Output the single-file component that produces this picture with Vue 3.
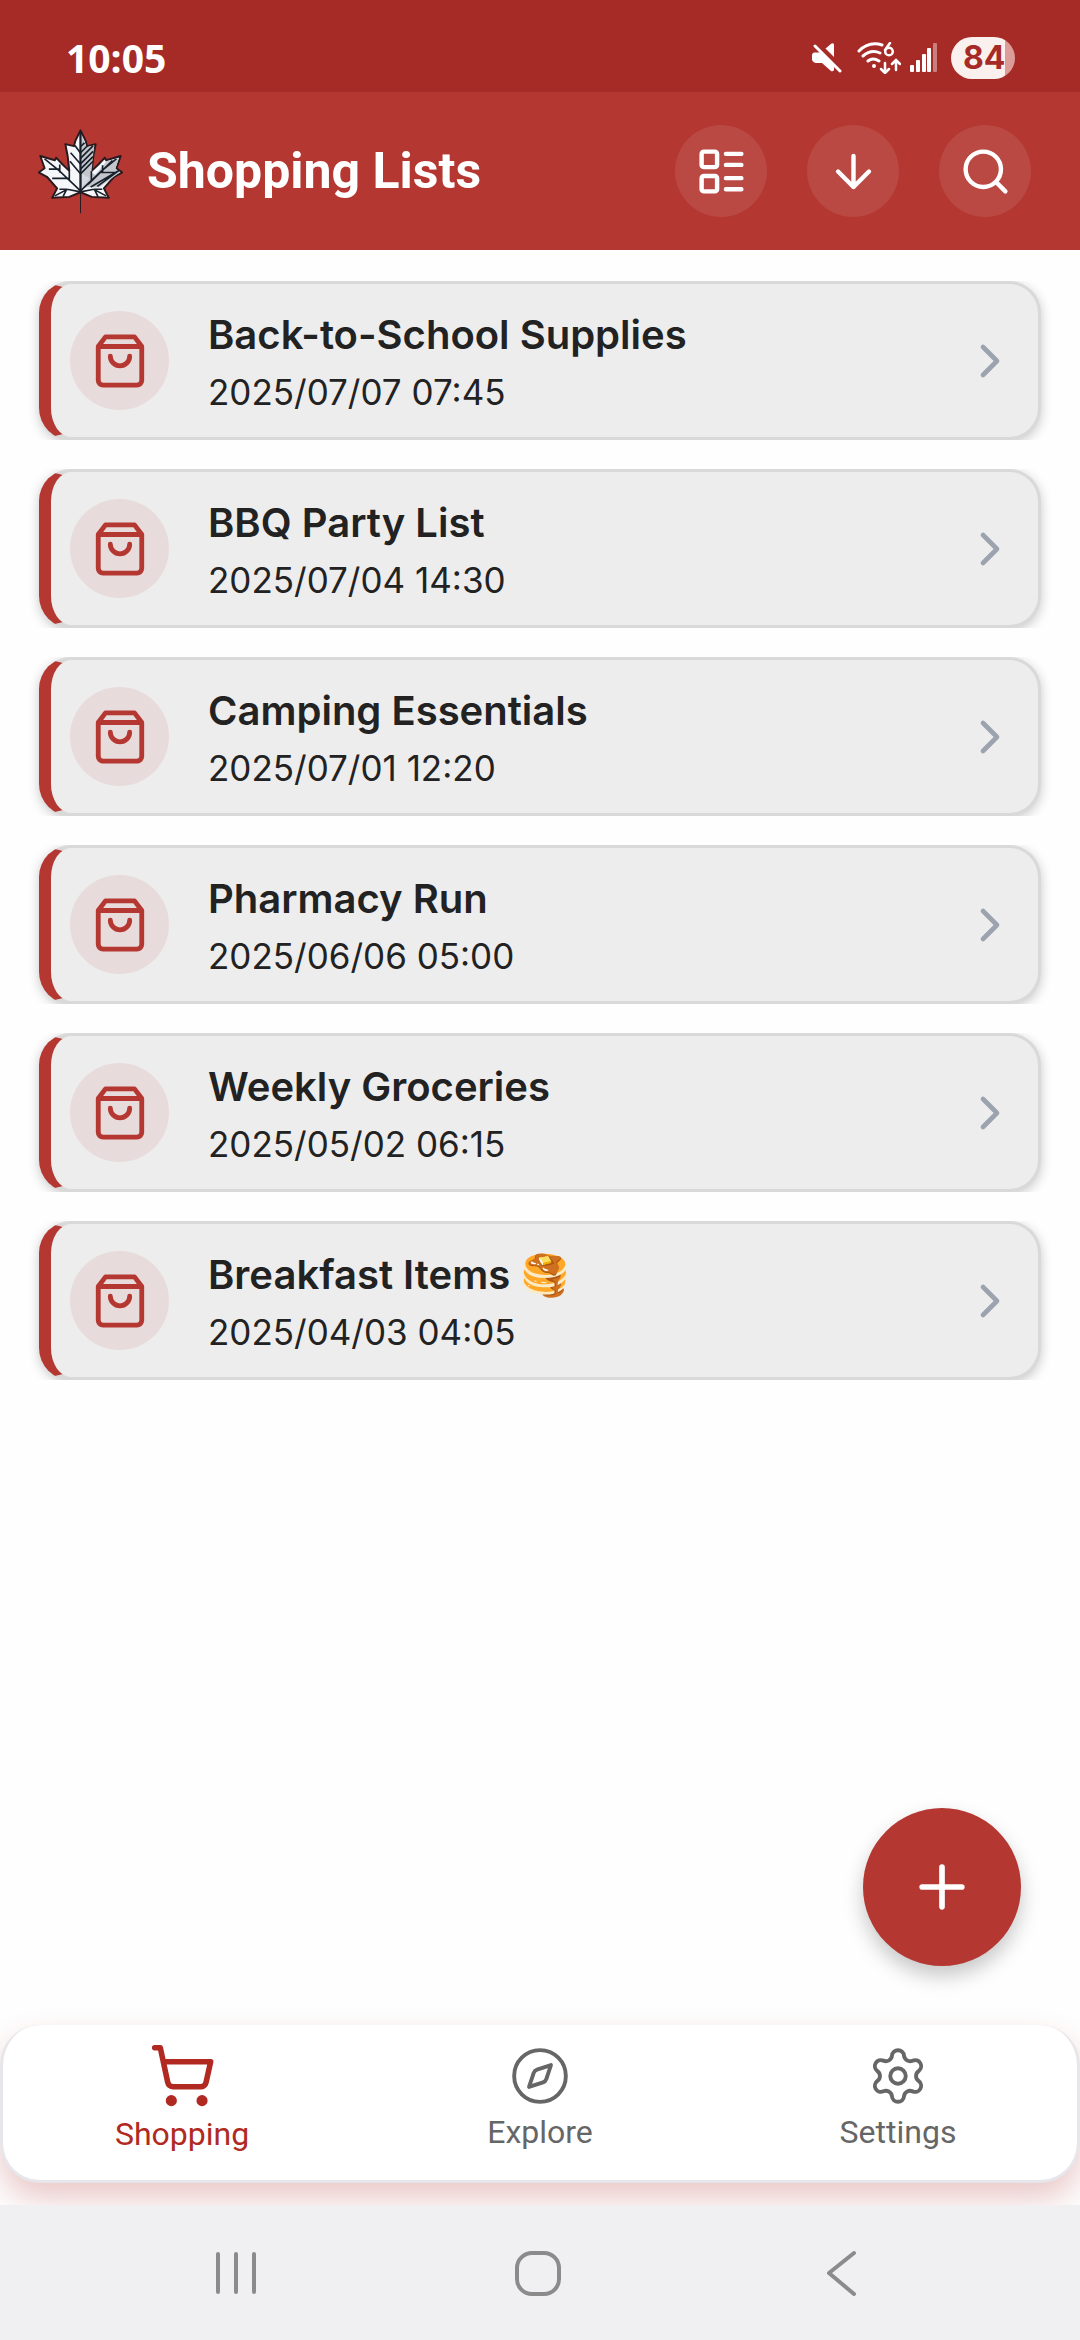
<script setup>
import { ref } from 'vue'

const lists = [
  { id: 1, title: 'Back-to-School Supplies', date: '2025/07/07 07:45' },
  { id: 2, title: 'BBQ Party List', date: '2025/07/04 14:30' },
  { id: 3, title: 'Camping Essentials', date: '2025/07/01 12:20' },
  { id: 4, title: 'Pharmacy Run', date: '2025/06/06 05:00' },
  { id: 5, title: 'Weekly Groceries', date: '2025/05/02 06:15' },
  { id: 6, title: 'Breakfast Items 🥞', date: '2025/04/03 04:05' },
]

const actions = [
  {
    label: 'Change layout',
    path: 'M4 3h5a1 1 0 0 1 1 1v5a1 1 0 0 1-1 1H4a1 1 0 0 1-1-1V4a1 1 0 0 1 1-1zM4 14h5a1 1 0 0 1 1 1v5a1 1 0 0 1-1 1H4a1 1 0 0 1-1-1v-5a1 1 0 0 1 1-1zM14 4h7M14 9h7M14 15h7M14 20h7',
  },
  { label: 'Sort descending', path: 'M12 5v14M19 12l-7 7-7-7' },
  { label: 'Search', path: 'M21 21l-4.34-4.34M19 11a8 8 0 1 1-16 0 8 8 0 0 1 16 0z' },
]

const tabs = [
  {
    name: 'Shopping',
    path: 'M2.05 2.05h2l2.66 12.42a2 2 0 0 0 2 1.58h9.78a2 2 0 0 0 1.95-1.57l1.65-7.43H5.12M9 21a1 1 0 1 1-2 0 1 1 0 0 1 2 0zM20 21a1 1 0 1 1-2 0 1 1 0 0 1 2 0z',
  },
  {
    name: 'Explore',
    path: 'M16.24 7.76l-1.804 5.411a2 2 0 0 1-1.265 1.265L7.76 16.24l1.804-5.411a2 2 0 0 1 1.265-1.265zM22 12a10 10 0 1 1-20 0 10 10 0 0 1 20 0z',
  },
  {
    name: 'Settings',
    path: 'M9.671 4.136a2.34 2.34 0 0 1 4.659 0 2.34 2.34 0 0 0 3.319 1.915 2.34 2.34 0 0 1 2.33 4.033 2.34 2.34 0 0 0 0 3.831 2.34 2.34 0 0 1-2.33 4.033 2.34 2.34 0 0 0-3.319 1.915 2.34 2.34 0 0 1-4.659 0 2.34 2.34 0 0 0-3.32-1.915 2.34 2.34 0 0 1-2.33-4.033 2.34 2.34 0 0 0 0-3.831A2.34 2.34 0 0 1 6.35 6.051a2.34 2.34 0 0 0 3.319-1.915M15 12a3 3 0 1 1-6 0 3 3 0 0 1 6 0z',
  },
]

const active = ref('Shopping')
</script>

<template>
  <div class="screen">
    <div class="status">
      <span class="clock">10:05</span>
      <div class="indicators">
        <svg class="mute" viewBox="0 0 30 30" fill="#fff" aria-hidden="true">
          <path d="M2 9.500h7.500L22 22v5q-1 2-3 1l-9-8H4q-4-1-4-4v-4q0-2 2-2.500z" />
          <path d="M13.500 5.500l6-5q2-1 2.500 1V14z" />
          <path d="M3 3l25 25" stroke="#fff" stroke-width="3" stroke-linecap="round" />
        </svg>
        <svg class="wifi" viewBox="0 0 44 32" fill="none" stroke="#fff" stroke-width="3" stroke-linecap="round" aria-hidden="true">
          <path d="M2 9Q12-1 25 3M6 14q8-7 17-3M11 19q5-4 11 0" />
          <circle cx="17" cy="24" r="2" fill="#fff" stroke="none" />
          <path d="M33 1l-5 7" stroke-width="2.500" />
          <circle cx="32" cy="9.500" r="3.800" stroke-width="2.500" />
          <path d="M28 21v9M24 27l4 4 4-4M39 28v-9M35 22l4-4 4 4" stroke-width="2.500" />
        </svg>
        <svg class="signal" viewBox="0 0 28 30" fill="#fff" aria-hidden="true">
          <rect x="0" y="22" width="4" height="7" rx="1" />
          <rect x="6" y="17" width="4" height="12" rx="1" />
          <rect x="12" y="11" width="4" height="18" rx="1" />
          <rect x="17" y="5" width="4" height="24" rx="1" />
          <rect x="23" y="0" width="4" height="29" rx="1" opacity="0.4" />
        </svg>
        <span class="battery">84</span>
      </div>
    </div>

    <header class="bar">
      <svg class="logo" viewBox="52 58 258 258" aria-hidden="true">
        <path
          d="M181 62l16 33 4 15 26-6-7 36-5 45 21-20 19-20 4 8 44-13-13 37 18 13-25 13-31 35 15 29-52-3-34-14-34 14-52 3 15-29-31-35-25-13 18-13-13-37 44 13 4-8 19 20 21 20-5-45-7-36 26 6 4-15z"
          fill="#f5f7fa" stroke="#2a1a20" stroke-width="6" stroke-linejoin="round"
        />
        <path d="M185 235V80l15 33 22-4-8 82 12 6 35-42 36-8-10 32 13 11-62 45z" fill="#c3c6cc" />
        <path d="M181 242V190l28 18z" fill="#d5d8df" />
        <g stroke="#18202a" stroke-width="7" fill="none">
          <path d="M181 64v184" />
          <path d="M181 246l-64-61-45-36M95 208h50M85 180h34M118 190v-24M181 194l-32-38M181 164l-30-34M181 131l-17-23M147 186v28M181 249l-40-8-38 20M141 241h-24M138 243l-10 20" stroke-width="5" />
          <path d="M181 246l64-61 45-36M181 194l38-38M181 180l38-38M181 164l38-38M181 147l38-38M181 130l22-22M181 112l12-12M214 186v28M204 226l74-72M212 234l86-50M232 232l60-44M248 168v22M244 190h46M181 249l40-8 38 20M221 241h26M224 243l10 20" stroke-width="5" />
        </g>
        <path d="M181 248v66" stroke="#2a1a20" stroke-width="3" />
      </svg>
      <h1>Shopping Lists</h1>
      <div class="actions">
        <button v-for="a in actions" :key="a.label" type="button" class="round" :aria-label="a.label">
          <svg class="line" viewBox="0 0 24 24"><path :d="a.path" /></svg>
        </button>
      </div>
    </header>

    <main>
      <ul class="lists">
        <li v-for="l in lists" :key="l.id">
          <a href="#" class="card">
            <span class="badge">
              <svg class="line" viewBox="0 0 24 24">
                <path d="M6 2L3 6v14a2 2 0 0 0 2 2h14a2 2 0 0 0 2-2V6l-3-4zM3 6h18M16 10a4 4 0 0 1-8 0" />
              </svg>
            </span>
            <span class="text">
              <span class="title">{{ l.title }}</span>
              <span class="date">{{ l.date }}</span>
            </span>
            <svg class="line chevron" viewBox="0 0 24 24"><path d="M9 18l6-6-6-6" /></svg>
          </a>
        </li>
      </ul>
      <button type="button" class="fab" aria-label="New list">
        <svg class="line" viewBox="0 0 24 24"><path d="M5 12h14M12 5v14" /></svg>
      </button>
    </main>

    <div class="dock">
      <nav class="tabs">
        <button
          v-for="t in tabs" :key="t.name" type="button" class="tab"
          :class="{ active: active === t.name }" @click="active = t.name"
        >
          <svg class="line" viewBox="0 0 24 24"><path :d="t.path" /></svg>
          <span>{{ t.name }}</span>
        </button>
      </nav>
    </div>

    <div class="system">
      <button type="button" aria-label="Recent apps">
        <svg viewBox="0 0 48 48"><path d="M6 5v38M24 5v38M42 5v38" /></svg>
      </button>
      <button type="button" aria-label="Home">
        <svg viewBox="0 0 48 48"><rect x="3" y="4" width="42" height="41" rx="15" /></svg>
      </button>
      <button type="button" aria-label="Back">
        <svg viewBox="0 0 48 48"><path d="M37 4L12 24l25 21" /></svg>
      </button>
    </div>
  </div>
</template>

<style>
body {
  margin: 0;
}
</style>

<style scoped>
.screen {
  display: flex;
  flex-direction: column;
  min-height: 100vh;
  background: #fefefe;
  font-family: Inter, "Noto Sans", sans-serif;
}

button {
  padding: 0;
  border: 0;
  background: none;
  font: inherit;
  cursor: pointer;
}

svg {
  display: block;
  flex: none;
}

.line {
  fill: none;
  stroke: currentColor;
  stroke-width: 2;
  stroke-linecap: round;
  stroke-linejoin: round;
}

.status {
  display: flex;
  align-items: center;
  justify-content: space-between;
  height: 68px;
  padding: 24px 65px 0 66px;
  background: #a62b26;
  color: #fff;
}

.clock {
  font: 700 39px/42px "Open Sans", sans-serif;
}

.indicators {
  display: flex;
  align-items: center;
}

.mute {
  width: 30px;
  height: 30px;
  margin-right: 15px;
}

.wifi {
  width: 44px;
  height: 32px;
  margin-right: 9px;
}

.signal {
  width: 28px;
  height: 30px;
  margin-right: 13px;
}

.battery {
  box-sizing: border-box;
  width: 64px;
  border-radius: 21px;
  padding-left: 12px;
  background: linear-gradient(90deg, #faf0ee 54px, #dc9d99 54px);
  color: #a62b26;
  font: 700 32px/42px Inter, sans-serif;
}

.bar {
  display: flex;
  align-items: center;
  height: 158px;
  padding: 0 49px 0 38px;
  background: #b43731;
  color: #fff;
}

.logo {
  width: 85px;
  height: 85px;
}

h1 {
  flex: 1;
  margin: 0 0 0 24px;
  font: 700 50px/56px Roboto, sans-serif;
}

.actions {
  display: flex;
  gap: 40px;
}

.round {
  display: grid;
  place-items: center;
  width: 92px;
  height: 92px;
  border-radius: 50%;
  background: rgba(255, 255, 255, 0.09);
  color: #fff;
}

.round svg {
  width: 53px;
  height: 53px;
}

main {
  position: relative;
  flex: 1;
}

.lists {
  display: flex;
  flex-direction: column;
  gap: 29px;
  margin: 0;
  padding: 31px 39px;
  list-style: none;
}

.card {
  box-sizing: border-box;
  display: flex;
  align-items: center;
  height: 159px;
  padding: 0 20px 0 19px;
  border: 3px solid #d9d9d9;
  border-left: 12px solid #b43731;
  border-radius: 32px;
  background: #ededed;
  color: #222;
  text-decoration: none;
  box-shadow: 0 3px 12px rgba(0, 0, 0, 0.22);
  clip-path: inset(0 -32px);
}

.badge {
  display: grid;
  place-items: center;
  width: 99px;
  height: 99px;
  border-radius: 50%;
  background: #e8dbdb;
  color: #b43731;
}

.badge svg {
  width: 58px;
  height: 58px;
}

.text {
  display: flex;
  flex: 1;
  flex-direction: column;
  margin-left: 39px;
}

.title {
  font-size: 40px;
  font-weight: 600;
  line-height: 62px;
}

.date {
  font-size: 35px;
  line-height: 52px;
}

.chevron {
  width: 56px;
  height: 56px;
  color: #9ca3af;
}

.fab {
  position: absolute;
  right: 59px;
  bottom: 59px;
  display: grid;
  place-items: center;
  width: 158px;
  height: 158px;
  border-radius: 50%;
  background: #b43731;
  color: #fff;
  box-shadow: 0 10px 20px rgba(0, 0, 0, 0.22);
}

.fab svg {
  width: 68px;
  height: 68px;
}

.dock {
  padding-bottom: 22px;
}

.tabs {
  box-sizing: border-box;
  display: grid;
  grid-template-columns: repeat(3, 1fr);
  height: 158px;
  border: 3px solid #e6e6eb;
  border-top: 0;
  border-radius: 40px;
  background: #fff;
  box-shadow: 0 16px 32px rgba(170, 30, 30, 0.24);
}

.tab {
  display: flex;
  flex-direction: column;
  align-items: center;
  justify-content: center;
  gap: 6px;
  padding-bottom: 10px;
  color: #666;
  font: 400 32px/38px Roboto, sans-serif;
}

.tab svg {
  width: 62px;
  height: 62px;
  stroke-width: 1.5;
}

.tab.active {
  color: #b02a22;
}

.tab.active svg {
  width: 67px;
  height: 67px;
  stroke-width: 2;
}

.system {
  position: relative;
  display: grid;
  grid-template-columns: repeat(3, 1fr);
  height: 135px;
  padding: 0 88px 0 85px;
  background: #f0f0f3;
}

.system button {
  display: grid;
  place-items: center;
}

.system svg {
  width: 48px;
  height: 48px;
  fill: none;
  stroke: #8b8b8b;
  stroke-width: 4;
  stroke-linecap: round;
  stroke-linejoin: round;
}
</style>
